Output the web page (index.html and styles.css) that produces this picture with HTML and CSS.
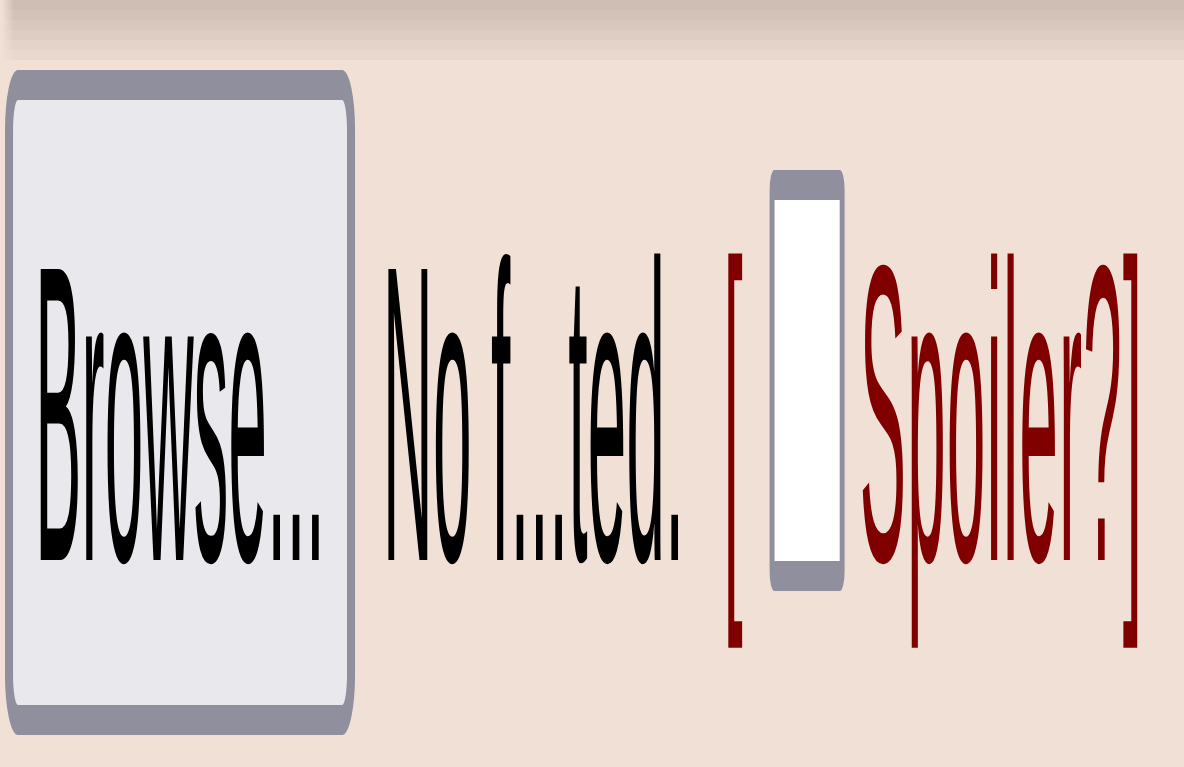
FILE: index.html
```html
<!DOCTYPE html>
<html lang="en">
<head>
    <meta charset="UTF-8">
    <meta name="viewport" content="width=device-width, initial-scale=1.0">
    <title>File</title>
    <link rel="stylesheet" href="styles.css">
</head>
<body>
    <div class="top-shade"></div>

    <div class="file-row">
        <button type="button" class="browse">Browse...</button>
        <span class="file-name">No f...ted.</span>
        <span class="spoiler">[<label><input type="checkbox" name="spoiler" class="spoiler-box"><span class="spoiler-text">Spoiler?</span></label>]</span>
    </div>
</body>
</html>
```

FILE: styles.css
```css
body {
    margin: 0;
    background-color: #f0e0d6;
    overflow: hidden;
    font-family: "Liberation Sans", Arial, sans-serif;
}

/* shadow under the header bar, drawn in steps */
.top-shade {
    height: 60px;
    margin-left: 2px;
    background: linear-gradient(
        rgba(60, 40, 30, 0.19) 0 10px,
        rgba(60, 40, 30, 0.16) 10px 20px,
        rgba(60, 40, 30, 0.13) 20px 30px,
        rgba(60, 40, 30, 0.10) 30px 40px,
        rgba(60, 40, 30, 0.07) 40px 50px,
        rgba(60, 40, 30, 0.04) 50px 60px
    );
    -webkit-mask-image: linear-gradient(to right, transparent, #000 12px);
    mask-image: linear-gradient(to right, transparent, #000 12px);
}

/* the row is laid out wide and squeezed horizontally */
.file-row {
    display: flex;
    align-items: baseline;
    margin: 10px 0 0 5px;
    font-size: 423px;
    line-height: 404px;
    white-space: nowrap;
    transform: scaleX(0.1645);
    transform-origin: 0 0;
}

.file-row > * {
    flex-shrink: 0;
}

.browse {
    width: 2128px;
    box-sizing: border-box;
    padding: 112px 0 89px;
    margin: 0;
    border: solid #8f8f9d;
    border-width: 30px 49px;
    border-radius: 79px / 60px;
    background-color: #e9e9ed;
    color: #000;
    font: inherit;
    text-align: center;
}

.file-name {
    margin-left: 168px;
    color: #000;
}

.spoiler {
    margin-left: 237px;
    color: #800000;
}

.spoiler-box {
    appearance: none;
    -webkit-appearance: none;
    display: inline-block;
    width: 456px;
    height: 421px;
    box-sizing: border-box;
    margin: 0 91px 0 164px;
    border: solid #8f8f9d;
    border-width: 30px 30px;
    border-radius: 30px / 20px;
    background-color: #fff;
    vertical-align: -31px;
}

.spoiler-text {
    letter-spacing: 6px;
}
```
